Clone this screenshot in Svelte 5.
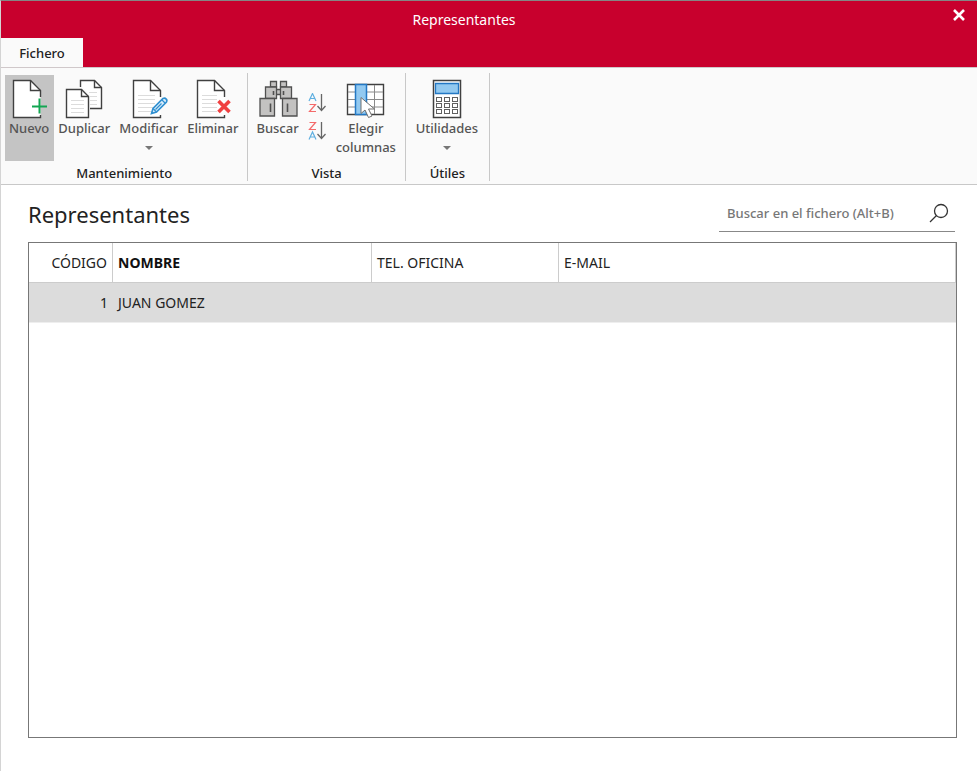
<script>
  let search = $state('');
  let selectedId = $state(1);

  const columns = [
    { key: 'id', label: 'CÓDIGO' },
    { key: 'name', label: 'NOMBRE', sorted: true },
    { key: 'phone', label: 'TEL. OFICINA' },
    { key: 'email', label: 'E-MAIL' }
  ];

  const rows = [{ id: 1, name: 'JUAN GOMEZ', phone: '', email: '' }];

  let visibleRows = $derived(
    rows.filter((row) => row.name.toLowerCase().includes(search.toLowerCase()))
  );
</script>

{#snippet lines(x, y, w, n)}
  {#each Array(n) as _, i}
    <path d="M{x} {y + i * 4}h{w}" stroke="#dcdcdc" />
  {/each}
{/snippet}

{#snippet page()}
  <path d="M4.5 1.5H21.5L31.5 11.5V38.5H4.5Z" fill="#fff" stroke="none" />
  <path d="M31.5 18V11.5L21.5 1.5H4.5V38.5H31.5V36" stroke="#404040" stroke-width="1.4" />
  <path d="M21.5 1.5V11.5H31.5" stroke="#404040" stroke-width="1.4" />
{/snippet}

<div class="window">
  <header class="titlebar">
    <h1>Representantes</h1>
    <button class="close" aria-label="Cerrar">
      <svg width="12" height="12" viewBox="0 0 12 12"><path d="M1 1L11 11M11 1L1 11" stroke="#fff" stroke-width="2.6" /></svg>
    </button>
    <button class="tab">Fichero</button>
  </header>

  <div class="ribbon">
    <section class="group">
      <div class="tools">
        <button class="tool active">
          <svg class="icon" viewBox="0 0 40 40">
            {@render page()}
            <path d="M30.5 19.5V34.5M23 27.5H38" stroke="#12a652" stroke-width="2" />
          </svg>
          Nuevo
        </button>
        <button class="tool">
          <svg class="icon" viewBox="0 0 40 40">
            <path d="M16.5 1.5H30.5L37.5 8.5V29.5H16.5Z" fill="#fff" stroke="#404040" stroke-width="1.4" />
            <path d="M30.5 1.5V8.5H37.5" stroke="#404040" stroke-width="1.4" />
            {@render lines(25, 13.5, 8, 4)}
            <path d="M1.5 8H18L26 16V40H1.5Z" fill="#fafafa" stroke="none" />
            <path d="M2.5 10.5H17.5L24.5 17.5V38.5H2.5Z" fill="#fff" stroke="#404040" stroke-width="1.4" />
            <path d="M17.5 10.5V17.5H24.5" stroke="#404040" stroke-width="1.4" />
            {@render lines(7, 21.5, 13, 4)}
          </svg>
          Duplicar
        </button>
        <button class="tool">
          <svg class="icon" viewBox="0 0 40 40">
            {@render page()}
            {@render lines(9, 16.5, 17, 5)}
            <path d="M22.5 34.5L24 29.5L34 19.5Q36 18.5 37 20Q38.5 21 37.5 23L27.5 33Z" fill="#d9edfb" stroke="#2f8fd0" stroke-width="1.6" />
            <path d="M33 21L36 24M26.5 30.5L32.5 24.5M24 29.5L27.5 33" stroke="#2f8fd0" stroke-width="1.2" />
          </svg>
          Modificar
          <span class="arrow"></span>
        </button>
        <button class="tool">
          <svg class="icon" viewBox="0 0 40 40">
            {@render page()}
            {@render lines(9, 16.5, 15, 5)}
            <path d="M25.5 22L36.5 33M36.5 22L25.5 33" stroke="#f04040" stroke-width="3.6" />
          </svg>
          Eliminar
        </button>
      </div>
      <h2>Mantenimiento</h2>
    </section>

    <section class="group">
      <div class="tools">
        <button class="tool">
          <svg class="icon" viewBox="0 0 40 40">
            <g fill="#c3c2c1" stroke="#505050" stroke-width="1.3">
              <path d="M18 10.5H23V15.5H18Z" />
              <path d="M12.5 2.5H18.5V8H12.5ZM22.5 2.5H28.5V8H22.5Z" />
              <path d="M7.5 8H18.5V19.5H7.5ZM22.5 8H33.5V19.5H22.5Z" />
              <path d="M2 19.5H16.5V37H2ZM24.5 19.5H39V37H24.5Z" />
            </g>
            <path d="M15.5 12V16M25.5 12V16M12.5 24.5V33M29.5 24.5V33" stroke="#505050" stroke-width="1.6" />
          </svg>
          Buscar
        </button>
        <div class="sort">
          <button aria-label="Orden ascendente">
            <svg width="20" height="20" viewBox="0 0 20 20">
              <path d="M2 8L5.5 0.5L9 8M3 5.5H8" stroke="#5fafe0" stroke-width="1.2" />
              <path d="M2.500 11.5H8.5L2.5 18.5H9" stroke="#f46a6a" stroke-width="1.2" />
              <path d="M14.5 1V17M10.5 13L14.5 17.5L18.5 13" stroke="#666" stroke-width="1.3" />
            </svg>
          </button>
          <button aria-label="Orden descendente">
            <svg width="20" height="20" viewBox="0 0 20 20">
              <path d="M2.5 1.5H8.5L2.5 8.5H9" stroke="#f46a6a" stroke-width="1.2" />
              <path d="M2 18.5L5.5 11L9 18.5M3 16H8" stroke="#5fafe0" stroke-width="1.2" />
              <path d="M14.5 1V17M10.5 13L14.5 17.5L18.5 13" stroke="#666" stroke-width="1.3" />
            </svg>
          </button>
        </div>
        <button class="tool">
          <svg class="icon" viewBox="0 0 40 40">
            <path d="M1.5 5.5H37.5V35.5H1.5Z" fill="#fff" stroke="#404040" stroke-width="1.4" />
            <path d="M2 13H37M2 20.5H37M2 28H37M28.5 6V35" stroke="#8a8a8a" />
            <path d="M9.5 5.5H20.5V35.5H9.5Z" fill="#92c9f0" stroke="#2378c4" stroke-width="1.5" />
            <path d="M15 18.5V34.5L19 31L22.5 38.5L26 37L22.5 30H28.5Z" fill="#fff" stroke="#707070" />
          </svg>
          Elegir<br />columnas
        </button>
      </div>
      <h2>Vista</h2>
    </section>

    <section class="group">
      <div class="tools">
        <button class="tool wide">
          <svg class="icon" viewBox="0 0 40 40">
            <path d="M6.5 1.5H33.5V38.5H6.5Z" fill="#fff" stroke="#404040" stroke-width="1.5" />
            <path d="M8.5 4.5H31.5V14.5H8.5Z" fill="#92c9f0" stroke="#2378c4" stroke-width="1.3" />
            {#each [18.5, 24.5, 30.5] as y}
              {#each [9.5, 17.5, 25.5] as x}
                <rect {x} {y} width="5" height="4" fill="#fff" stroke="#606060" />
              {/each}
            {/each}
          </svg>
          Utilidades
          <span class="arrow"></span>
        </button>
      </div>
      <h2>Útiles</h2>
    </section>
  </div>

  <main>
    <div class="heading">
      <h2>Representantes</h2>
      <div class="search">
        <input type="text" bind:value={search} placeholder="Buscar en el fichero (Alt+B)" aria-label="Buscar en el fichero" accesskey="b" />
        <button aria-label="Buscar">
          <svg width="20" height="20" viewBox="0 0 20 20"><circle cx="12" cy="8" r="6.5" stroke="#333" stroke-width="1.3" /><path d="M7.5 12.5L1 19" stroke="#333" stroke-width="1.3" /></svg>
        </button>
      </div>
    </div>

    <div class="grid">
      <table>
        <thead>
          <tr>
            {#each columns as col}
              <th class={col.key} class:sorted={col.sorted}>{col.label}</th>
            {/each}
          </tr>
        </thead>
        <tbody>
          {#each visibleRows as row (row.id)}
            <tr class:selected={row.id === selectedId} onclick={() => (selectedId = row.id)}>
              {#each columns as col}
                <td class={col.key}>{row[col.key]}</td>
              {/each}
            </tr>
          {/each}
        </tbody>
      </table>
    </div>
  </main>
</div>

<style>
  :global(body) { margin: 0; }

  .window {
    box-sizing: border-box;
    min-height: 100vh;
    display: flex;
    flex-direction: column;
    border-top: 1px solid #858585;
    border-left: 1px solid #d4d4d4;
    background: #fff;
    color: #222;
    font-family: 'Noto Sans', 'Open Sans', sans-serif;
    font-size: 13px;
  }

  h1, h2 { margin: 0; font-weight: 400; }

  button {
    padding: 0;
    border: none;
    background: none;
    color: inherit;
    font: inherit;
    cursor: pointer;
  }

  svg { display: block; fill: none; }

  .titlebar {
    display: grid;
    grid-template-columns: 50px 1fr 100px;
    grid-template-rows: 37px 30px;
    background: #c8002d;
  }

  .titlebar h1 {
    grid-column: 2;
    color: #fff;
    font-size: 14px;
    line-height: 37px;
    text-align: center;
  }

  .close {
    display: flex;
    justify-content: flex-end;
    padding: 8px 12px;
  }

  .tab {
    grid-column: 1;
    width: 82px;
    background: #fafafa;
    font-weight: 500;
    line-height: 30px;
  }

  .ribbon {
    display: flex;
    padding: 5px 0 3px;
    border-top: 1px solid #d0c8ca;
    border-bottom: 1px solid #c8c8c8;
    background: #fafafa;
    margin-top: -1px;
  }

  .group {
    display: flex;
    flex-direction: column;
    padding: 2px 4px 0;
    border-right: 1px solid #c8c8c8;
  }

  .group h2 {
    font-size: 13px;
    font-weight: 500;
    line-height: 16px;
    text-align: center;
  }

  .tools { display: flex; height: 90px; }

  .tool {
    height: 86px;
    display: flex;
    flex-direction: column;
    align-items: center;
    padding: 4px 5px 0 4px;
    color: #555;
    font-weight: 500;
    line-height: 19px;
  }

  .tool.active { background: #c4c4c4; }
  .tool.wide { min-width: 75px; }

  .icon { width: 40px; height: 40px; flex: none; }

  .arrow {
    margin-top: 8px;
    border: 4px solid transparent;
    border-top-color: #777;
    border-bottom: none;
  }

  .sort {
    display: flex;
    flex-direction: column;
    gap: 8px;
    padding: 18px 5px 0 3px;
  }

  main {
    flex: 1;
    display: flex;
    flex-direction: column;
    padding: 9px 20px 33px 27px;
  }

  .heading {
    display: flex;
    justify-content: space-between;
    align-items: flex-start;
    height: 48px;
    padding-right: 2px;
  }

  .heading h2 { font-size: 22px; line-height: 40px; }

  .search {
    display: flex;
    align-items: center;
    width: 236px;
    height: 37px;
    border-bottom: 1px solid #888;
  }

  .search input {
    flex: 1;
    min-width: 0;
    padding: 0 8px;
    border: none;
    outline: none;
    background: none;
    font: inherit;
    font-weight: 500;
    color: #222;
  }

  .search input::placeholder { color: #777; }

  .search button { padding-right: 6px; }

  .grid { flex: 1; border: 1px solid #777; }

  table {
    width: 100%;
    border-collapse: separate;
    border-spacing: 0;
    table-layout: fixed;
    font-size: 14px;
    line-height: 20px;
  }

  th, td {
    height: 40px;
    box-sizing: border-box;
    padding: 0 5px;
    text-align: left;
    font-weight: 400;
  }

  th { border-right: 1px solid #ccc; border-bottom: 1px solid #ccc; }
  th.sorted { font-weight: 700; color: #111; }

  th.id { width: 84px; }
  th.name { width: 259px; }
  th.phone { width: 187px; }
  .id { text-align: right; }

  .selected td { background: #dcdcdc; border-bottom: 1px solid #eee; }
</style>
